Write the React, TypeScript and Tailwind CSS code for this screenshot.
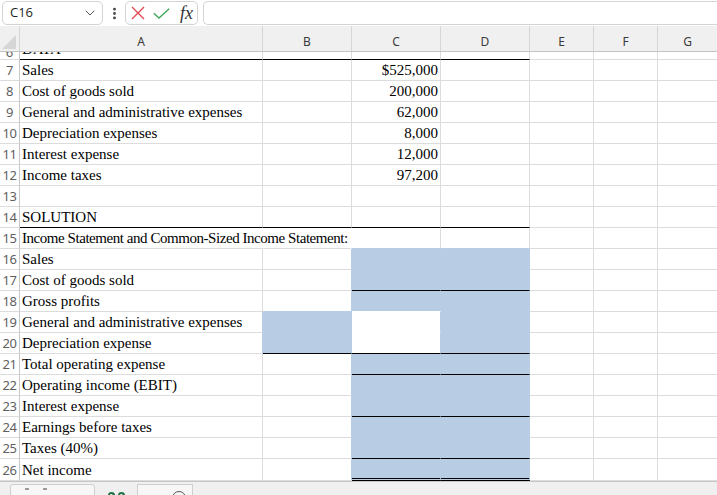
import React from "react";
import { ChevronDown, EllipsisVertical } from "lucide-react";

type BorderKey = "g" | "b" | "w" | "k" | "d";

interface CellSpec {
  t?: string;
  fill?: boolean;
  r?: BorderKey;
  b?: BorderKey;
  right?: boolean;
  over?: boolean;
  tight?: boolean;
}

const WIDTHS = ["w-[243px]", "w-[89px]", "w-[89px]", "w-[89px]", "w-[64px]", "w-[64px]", "w-[60px]"];
const LETTERS = ["A", "B", "C", "D", "E", "F", "G"];

const rightColor: Record<BorderKey, string> = {
  g: "border-r border-r-[#dcdcdc]",
  b: "border-r border-r-[#b8cce4]",
  w: "border-r border-r-white",
  k: "border-r border-r-black",
  d: "border-r border-r-[#dcdcdc]",
};

const bottomColor: Record<BorderKey, string> = {
  g: "border-b border-b-[#dcdcdc]",
  b: "border-b border-b-[#b8cce4]",
  w: "border-b border-b-white",
  k: "border-b border-b-black",
  d: "border-b-[3px] border-double border-b-black",
};

const serif = "font-['Liberation_Serif','Times_New_Roman',serif]";

function Cell({ spec, w }: { spec: CellSpec; w: string }) {
  return (
    <div
      className={`${w} shrink-0 h-full flex items-end pb-[1px] px-[2px] text-[15px] leading-[17px] text-black ${serif} ${
        spec.fill ? "bg-[#b8cce4]" : "bg-white"
      } ${rightColor[spec.r ?? "g"]} ${bottomColor[spec.b ?? "g"]} ${
        spec.right ? "justify-end" : ""
      } ${spec.over ? "overflow-visible relative z-10 whitespace-nowrap" : "overflow-hidden whitespace-nowrap"} ${
        spec.tight ? "tracking-[-0.45px]" : ""
      }`}
    >
      {spec.t}
    </div>
  );
}

function Row({ n, cells, h = "h-[21px]" }: { n: number; cells: CellSpec[]; h?: string }) {
  const full: CellSpec[] = [...cells];
  while (full.length < 7) full.push({});
  return (
    <div className={`flex ${h} shrink-0`}>
      <div className="w-[20px] shrink-0 h-full flex items-end justify-center pb-[2px] border-r border-r-[#c8c8c8] border-b border-b-[#dcdcdc] bg-white text-[13px] leading-[15px] text-[#5f5f5f] font-['Noto_Sans',sans-serif] tracking-[-0.5px]">
        {n}
      </div>
      {full.map((c, i) => (
        <Cell key={i} spec={c} w={WIDTHS[i]} />
      ))}
    </div>
  );
}

const F: CellSpec = { fill: true, r: "b", b: "b" };

export default function App() {
  return (
    <div className="w-[717px] h-[495px] overflow-hidden bg-white flex flex-col font-['Noto_Sans',sans-serif]">
      {/* formula bar */}
      <div className="h-[26px] shrink-0 flex items-center bg-white pl-[2px]">
        <div className="w-[101px] h-[24px] rounded-[5px] border border-[#d4d4d4] flex items-center justify-between pl-[7px] pr-[4px]">
          <span className="text-[13px] text-[#1f1f1f] font-['Open_Sans',sans-serif]">C16</span>
          <ChevronDown size={16} strokeWidth={1.5} className="text-[#555]" />
        </div>
        <div className="w-[22px] flex justify-center">
          <EllipsisVertical size={15} strokeWidth={2.6} className="text-[#444]" />
        </div>
        <div className="w-[73px] h-[24px] rounded-[5px] border border-[#d4d4d4] flex items-center pl-[5px]">
          <svg width="14" height="14" viewBox="0 0 14 14" className="shrink-0">
            <path d="M1 1 L13 13 M13 1 L1 13" stroke="#e0464b" strokeWidth="1.3" fill="none" />
          </svg>
          <svg width="17" height="11" viewBox="0 0 17 11" className="ml-[8px] shrink-0">
            <path d="M0.8 5.2 L6 10 L16.2 0.8" stroke="#3ea85a" strokeWidth="1.4" fill="none" />
          </svg>
          <span className={`ml-[10px] italic text-[18px] leading-none text-[#333] ${serif}`}>fx</span>
        </div>
        <div className="ml-[5px] flex-1 h-[24px] rounded-l-[5px] border border-r-0 border-[#d4d4d4]" />
      </div>

      {/* column header */}
      <div className="h-[26px] shrink-0 flex bg-[#f0f0f0] border-b border-b-[#c4c4c4]">
        <div className="w-[20px] shrink-0 h-full flex items-end justify-end pb-[2px] pr-[3px] border-r border-r-[#d6d6d6]">
          <svg width="14" height="14" viewBox="0 0 14 14">
            <polygon points="14,0 14,14 0,14" fill="#d6d6d6" />
          </svg>
        </div>
        {LETTERS.map((l, i) => (
          <div
            key={l}
            className={`${WIDTHS[i]} shrink-0 h-full flex items-end justify-center pb-[2px] border-r border-r-[#d6d6d6] text-[12px] leading-[14px] text-[#3a3a3a]`}
          >
            {l}
          </div>
        ))}
      </div>

      {/* row 6 partially visible */}
      <div className="flex h-[8px] shrink-0 overflow-hidden">
        <div className="w-[20px] shrink-0 h-full flex items-end justify-center border-r border-r-[#c8c8c8] border-b border-b-[#dcdcdc] text-[13px] leading-[15px] text-[#616161] overflow-hidden">
          <span className="-mb-[1px]">6</span>
        </div>
        {WIDTHS.map((w, i) => (
          <div
            key={i}
            className={`${w} shrink-0 h-full flex items-end px-[2px] overflow-hidden border-r border-r-[#dcdcdc] ${
              i < 4 ? "border-b border-b-black" : "border-b border-b-[#dcdcdc]"
            } text-[15px] leading-[17px] ${serif}`}
          >
            {i === 0 ? <span className="mb-[1px]">DATA</span> : null}
          </div>
        ))}
      </div>

      <Row n={7} cells={[{ t: "Sales" }, {}, { t: "$525,000", right: true }]} />
      <Row n={8} cells={[{ t: "Cost of goods sold" }, {}, { t: "200,000", right: true }]} />
      <Row n={9} cells={[{ t: "General and administrative expenses" }, {}, { t: "62,000", right: true }]} />
      <Row n={10} cells={[{ t: "Depreciation expenses" }, {}, { t: "8,000", right: true }]} />
      <Row n={11} cells={[{ t: "Interest expense" }, {}, { t: "12,000", right: true }]} />
      <Row n={12} cells={[{ t: "Income taxes" }, {}, { t: "97,200", right: true }]} />
      <Row n={13} cells={[]} />
      <Row n={14} cells={[{ t: "SOLUTION", b: "k" }, { b: "k" }, { b: "k" }, { b: "k" }]} />
      <Row
        n={15}
        cells={[
          { t: "Income Statement and Common-Sized Income Statement:", over: true, r: "w", tight: true },
          { r: "w" },
          { b: "b" },
          { b: "b" },
        ]}
      />
      <Row n={16} cells={[{ t: "Sales" }, { r: "b" }, F, F]} />
      <Row n={17} cells={[{ t: "Cost of goods sold" }, { r: "b" }, { ...F, b: "k" }, { ...F, b: "k" }]} />
      <Row n={18} cells={[{ t: "Gross profits", r: "g" }, { r: "b", b: "b" }, { ...F, b: "w" }, F]} />
      <Row
        n={19}
        cells={[{ t: "General and administrative expenses", r: "b" }, F, { r: "b", b: "w" }, F]}
      />
      <Row
        n={20}
        cells={[{ t: "Depreciation expense", r: "b" }, { ...F, b: "k" }, { r: "b", b: "k" }, { ...F, b: "k" }]}
      />
      <Row n={21} cells={[{ t: "Total operating expense" }, { r: "b" }, { ...F, b: "k" }, { ...F, b: "k" }]} />
      <Row n={22} cells={[{ t: "Operating income (EBIT)" }, { r: "b" }, F, F]} />
      <Row n={23} cells={[{ t: "Interest expense" }, { r: "b" }, { ...F, b: "k" }, { ...F, b: "k" }]} />
      <Row n={24} cells={[{ t: "Earnings before taxes" }, { r: "b" }, F, F]} />
      <Row n={25} cells={[{ t: "Taxes (40%)" }, { r: "b" }, { ...F, b: "k" }, { ...F, b: "k" }]} />
      <Row
        n={26}
        h="h-[22px]"
        cells={[{ t: "Net income" }, { r: "b" }, { ...F, b: "d" }, { ...F, b: "d" }]}
      />

      {/* sheet tab bar (cut off) */}
      <div className="flex-1 bg-[#f0f0f0] border-t border-t-[#c6c6c6] flex items-start overflow-hidden">
        <div className="ml-[10px] mt-[2px] w-[85px] h-[20px] bg-[#f7f7f7] border border-[#cfcfcf] rounded-t-[3px] flex items-start gap-[14px] pl-[14px] pt-[3px]">
          <span className="w-[4px] h-[2px] bg-[#9a9a9a]" />
          <span className="w-[4px] h-[2px] bg-[#9a9a9a]" />
        </div>
        <div className="w-[42px] flex justify-center gap-[3px] pt-[10px]">
          <span className="w-[7px] h-[6px] rounded-t-full border-t-2 border-x-2 border-[#1e7145]" />
          <span className="w-[7px] h-[6px] rounded-t-full border-t-2 border-x-2 border-[#1e7145]" />
        </div>
        <div className="w-[56px] h-[20px] mt-[2px] bg-[#f7f7f7] border border-[#cfcfcf] flex items-start justify-end pr-[6px] pt-[6px]">
          <span className="w-[14px] h-[14px] rounded-full border-[1.5px] border-[#555]" />
        </div>
      </div>
    </div>
  );
}
